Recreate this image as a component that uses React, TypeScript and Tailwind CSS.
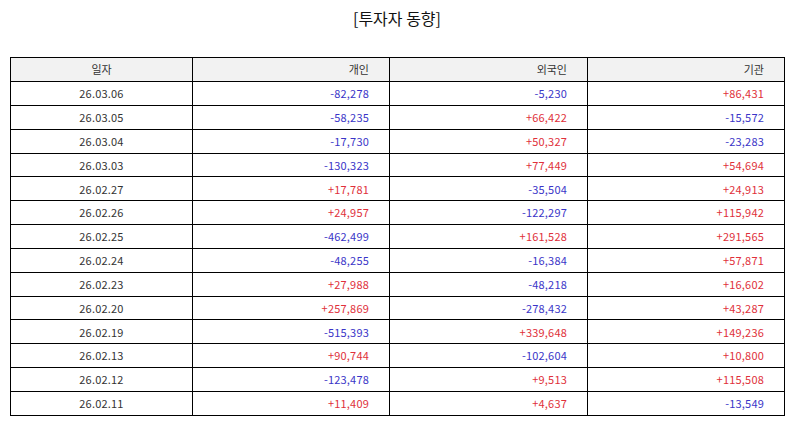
import React from "react";

const rows: [string, string, string, string][] = [
  ["26.03.06", "-82,278", "-5,230", "+86,431"],
  ["26.03.05", "-58,235", "+66,422", "-15,572"],
  ["26.03.04", "-17,730", "+50,327", "-23,283"],
  ["26.03.03", "-130,323", "+77,449", "+54,694"],
  ["26.02.27", "+17,781", "-35,504", "+24,913"],
  ["26.02.26", "+24,957", "-122,297", "+115,942"],
  ["26.02.25", "-462,499", "+161,528", "+291,565"],
  ["26.02.24", "-48,255", "-16,384", "+57,871"],
  ["26.02.23", "+27,988", "-48,218", "+16,602"],
  ["26.02.20", "+257,869", "-278,432", "+43,287"],
  ["26.02.19", "-515,393", "+339,648", "+149,236"],
  ["26.02.13", "+90,744", "-102,604", "+10,800"],
  ["26.02.12", "-123,478", "+9,513", "+115,508"],
  ["26.02.11", "+11,409", "+4,637", "-13,549"],
];

function Num({ v }: { v: string }) {
  const cls = v.startsWith("-") ? "text-[#3a35c8]" : "text-[#e0303a]";
  return <td className={`border-[1.5px] border-black text-right pr-[20px] tracking-[0.2px] ${cls}`}>{v}</td>;
}

export default function App() {
  return (
    <div
      className="w-[794px] h-[425px] bg-white overflow-hidden"
      style={{ fontFamily: '"Noto Sans CJK KR", "Noto Sans", sans-serif' }}
    >
      <div className="pt-[4px] h-[57px] text-center text-[16px] text-[#111] leading-[28px]">[투자자 동향]</div>
      <div className="px-[10px]">
        <table className="w-[774px] border-collapse border-[1.5px] border-black text-[11px] text-[#333] table-fixed">
          <colgroup>
            <col className="w-[182px]" />
            <col className="w-[197px]" />
            <col className="w-[198px]" />
            <col className="w-[197px]" />
          </colgroup>
          <thead>
            <tr className="h-[24px] bg-[#f2f2f2]">
              <th className="border-[1.5px] border-black font-normal text-center">일자</th>
              <th className="border-[1.5px] border-black font-normal text-right pr-[20px]">개인</th>
              <th className="border-[1.5px] border-black font-normal text-right pr-[20px]">외국인</th>
              <th className="border-[1.5px] border-black font-normal text-right pr-[20px]">기관</th>
            </tr>
          </thead>
          <tbody>
            {rows.map((r) => (
              <tr key={r[0]} className="h-[23.85px]">
                <td className="border-[1.5px] border-black text-center tracking-[0.2px]">{r[0]}</td>
                <Num v={r[1]} />
                <Num v={r[2]} />
                <Num v={r[3]} />
              </tr>
            ))}
          </tbody>
        </table>
      </div>
    </div>
  );
}
